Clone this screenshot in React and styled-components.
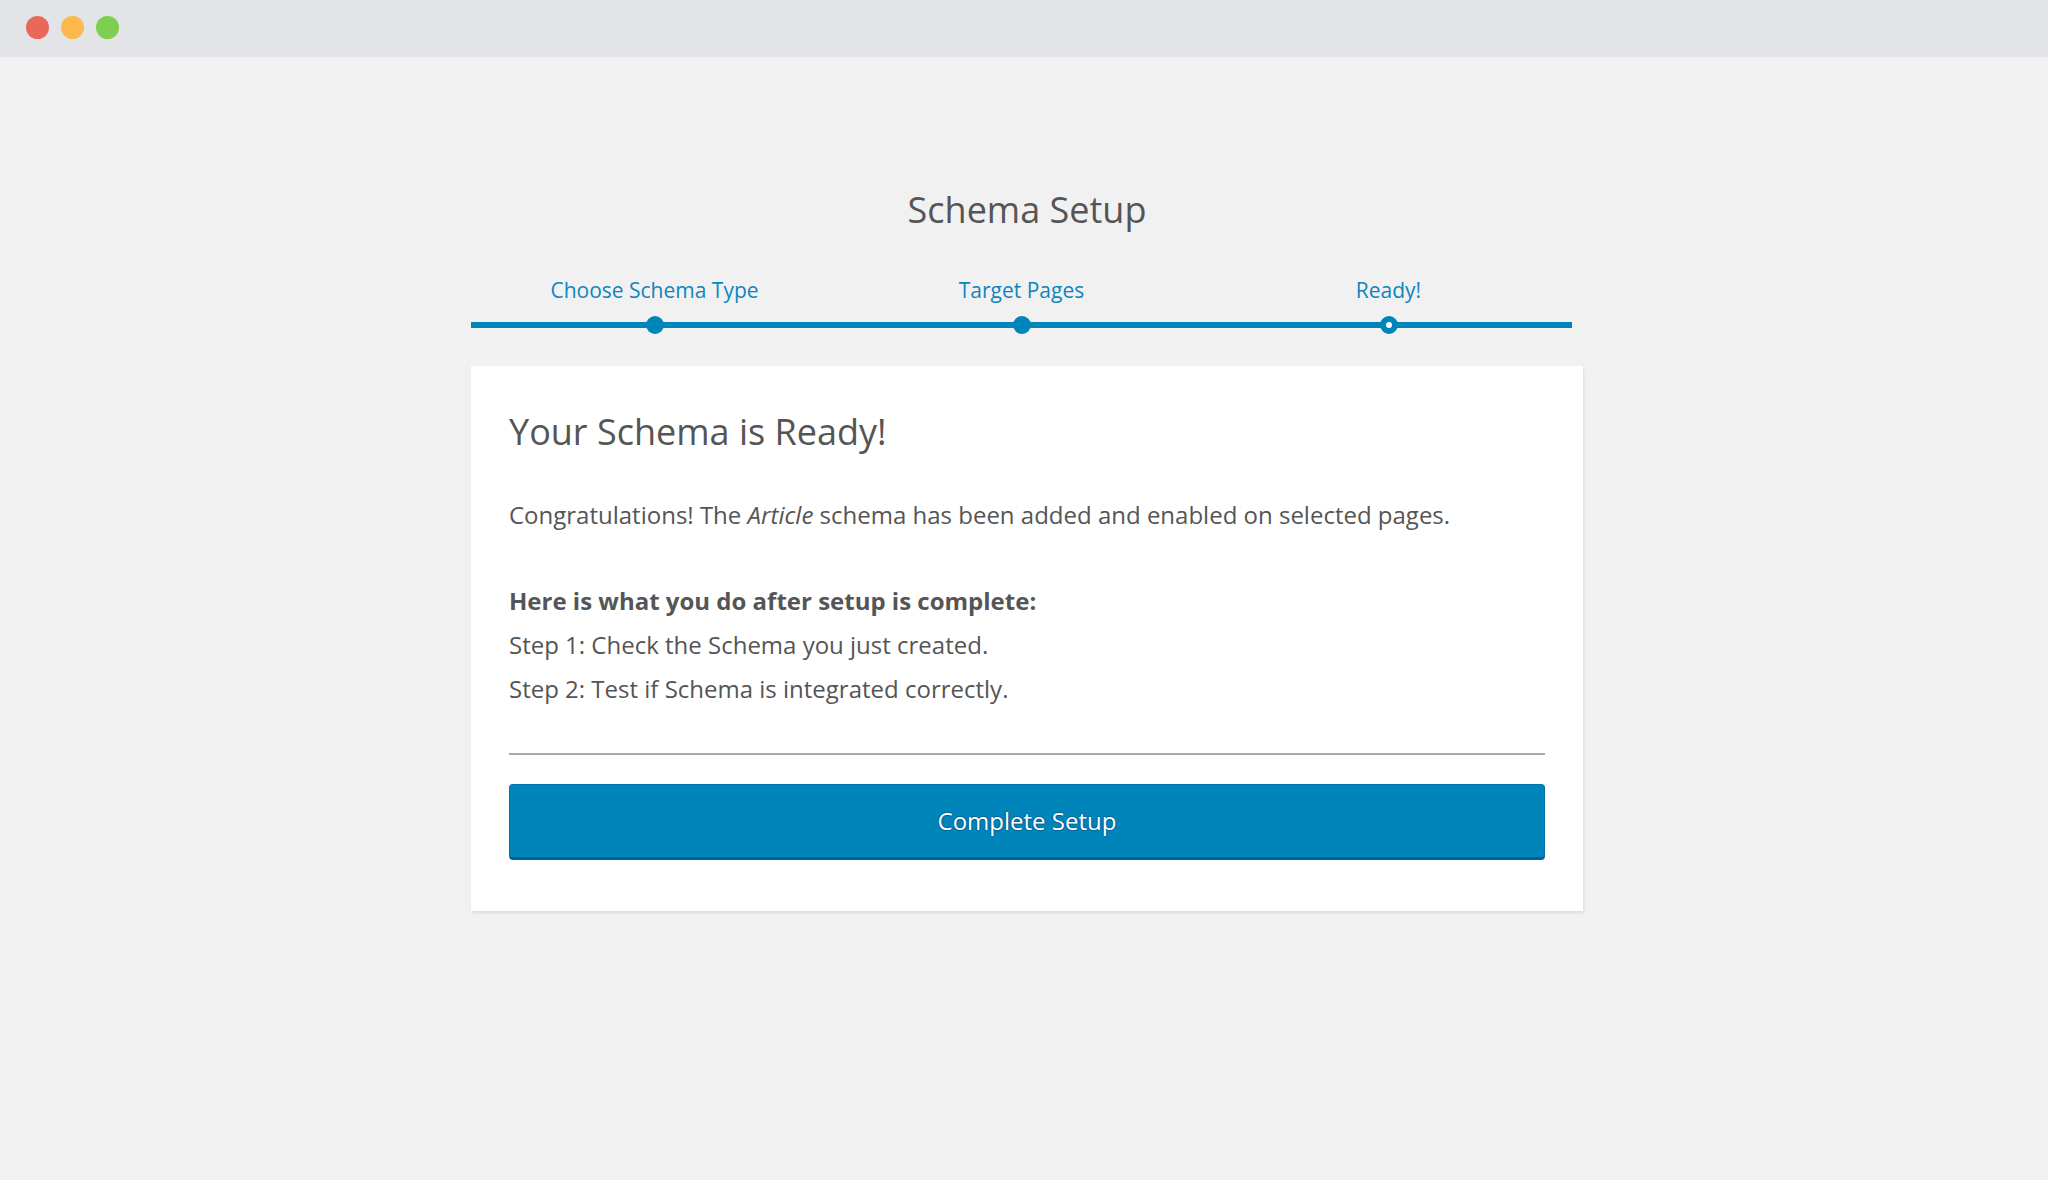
import React from "react";
import styled, { createGlobalStyle } from "styled-components";

const GlobalStyle = createGlobalStyle`
  html, body {
    margin: 0;
    padding: 0;
    background: #f1f1f1;
  }
  body {
    font-family: "Open Sans", "Noto Sans", "Liberation Sans", sans-serif;
    color: #555;
  }
  * { box-sizing: border-box; }
`;

const Window = styled.div`
  min-height: 1180px;
  display: flex;
  flex-direction: column;
  background: #f1f1f1;
`;

const TitleBar = styled.div`
  height: 57px;
  background: #e3e4e8;
  display: flex;
  align-items: center;
  gap: 12px;
  padding: 0 0 2px 26px;
`;

const Light = styled.span`
  width: 23px;
  height: 23px;
  border-radius: 50%;
  background: ${(p) => p.$color};
`;

const Content = styled.main`
  flex: 1;
  display: flex;
  flex-direction: column;
  align-items: center;
  padding: 129px 0 0 6px;
`;

const PageTitle = styled.h1`
  margin: 0;
  font-size: 36px;
  line-height: 48px;
  font-weight: 400;
  color: #555;
`;

const Steps = styled.ol`
  list-style: none;
  margin: 42px 11px 0 0;
  padding: 0;
  width: 1101px;
  display: grid;
  grid-template-columns: repeat(3, 1fr);
`;

const Step = styled.li`
  display: flex;
  flex-direction: column;
  align-items: center;
  gap: 12px;
`;

const StepLabel = styled.span`
  font-size: 21px;
  line-height: 28px;
  color: #0f85bf;
`;

const Rail = styled.div`
  align-self: stretch;
  height: 18px;
  display: flex;
  align-items: center;
  justify-content: center;
  background: linear-gradient(
    to bottom,
    transparent 6px,
    #0085ba 6px,
    #0085ba 12px,
    transparent 12px
  );
`;

const Dot = styled.span`
  width: 18px;
  height: 18px;
  border-radius: 50%;
  background: ${(p) => (p.$current ? "#fff" : "#0085ba")};
  border: ${(p) => (p.$current ? "6px solid #0085ba" : "none")};
`;

const Card = styled.section`
  margin-top: 32px;
  width: 1112px;
  background: #fff;
  box-shadow: 1px 2px 3px rgba(0, 0, 0, 0.09);
  padding: 44px 38px 51px;
`;

const CardTitle = styled.h2`
  margin: 0;
  font-size: 36px;
  line-height: 43px;
  font-weight: 400;
  color: #555;
`;

const Text = styled.p`
  margin: ${(p) => p.$mt || 0}px 0 0;
  font-size: 24px;
  line-height: 44px;
  color: #555;
  font-weight: ${(p) => (p.$bold ? 700 : 400)};
`;

const Divider = styled.hr`
  margin: 42px 0 0;
  border: 0;
  height: 2px;
  background: #a9a9a9;
`;

const PrimaryButton = styled.button`
  margin-top: 29px;
  width: 100%;
  height: 76px;
  display: flex;
  align-items: center;
  justify-content: center;
  background: #0085ba;
  border: 1px solid #0073aa;
  border-bottom: 3px solid #006291;
  border-radius: 4px;
  color: #fff;
  font-family: inherit;
  font-size: 24px;
  padding: 0 0 2px;
  text-shadow: 0 -1px 1px #006799, 1px 0 1px #006799, 0 1px 1px #006799,
    -1px 0 1px #006799;
  cursor: pointer;
`;

const steps = [
  { label: "Choose Schema Type" },
  { label: "Target Pages" },
  { label: "Ready!", current: true },
];

export default function App() {
  return (
    <>
      <GlobalStyle />
      <Window>
        <TitleBar>
          <Light $color="#e8685a" />
          <Light $color="#fdb94c" />
          <Light $color="#7ccf4f" />
        </TitleBar>
        <Content>
          <PageTitle>Schema Setup</PageTitle>
          <Steps>
            {steps.map((s) => (
              <Step key={s.label}>
                <StepLabel>{s.label}</StepLabel>
                <Rail>
                  <Dot $current={s.current} />
                </Rail>
              </Step>
            ))}
          </Steps>
          <Card>
            <CardTitle>Your Schema is Ready!</CardTitle>
            <Text $mt={40}>
              Congratulations! The <em>Article</em> schema has been added and
              enabled on selected pages.
            </Text>
            <Text $mt={42} $bold>
              Here is what you do after setup is complete:
            </Text>
            <Text>Step 1: Check the Schema you just created.</Text>
            <Text>Step 2: Test if Schema is integrated correctly.</Text>
            <Divider />
            <PrimaryButton>Complete Setup</PrimaryButton>
          </Card>
        </Content>
      </Window>
    </>
  );
}
